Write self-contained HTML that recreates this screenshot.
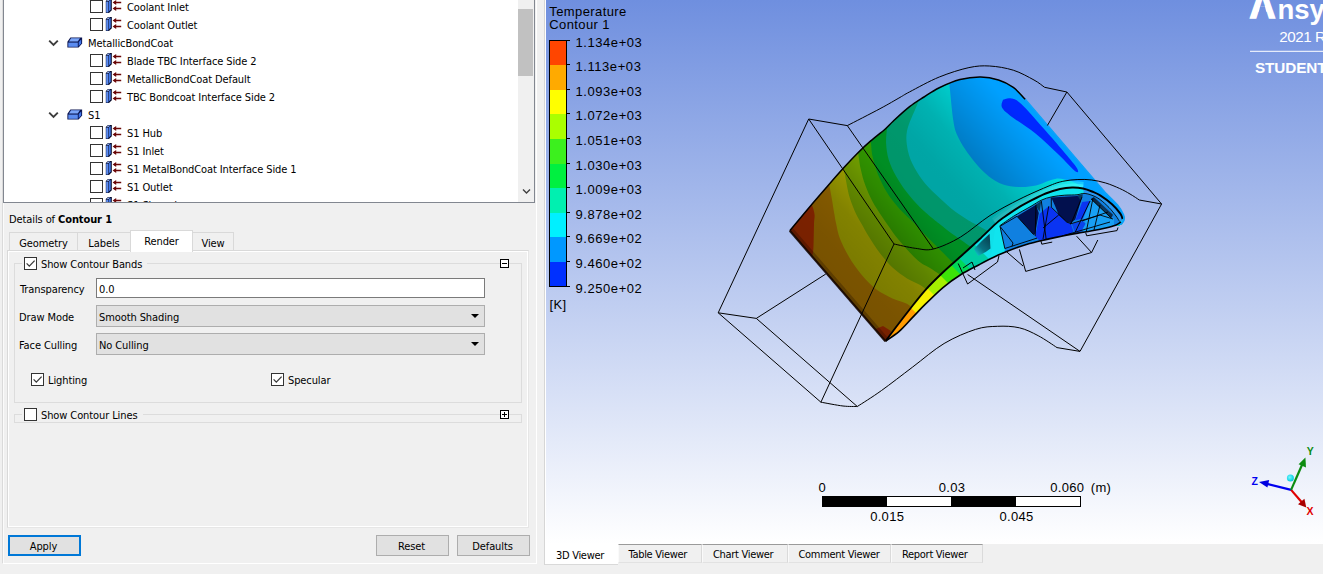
<!DOCTYPE html>
<html lang="en">
<head>
<meta charset="utf-8">
<title>CFD-Post</title>
<style>
html,body{margin:0;padding:0;}
body{width:1323px;height:574px;overflow:hidden;background:#f0f0f0;position:relative;
 font-family:"DejaVu Sans Condensed","Liberation Sans",sans-serif;font-size:11px;color:#000;letter-spacing:-0.1px;}
.abs{position:absolute;}
svg.ic{position:absolute;overflow:visible;}
#tree{position:absolute;left:3px;top:-1px;width:532px;height:204px;background:#fff;border:1px solid #828790;box-sizing:border-box;overflow:hidden;}
.row{position:absolute;left:-4px;width:520px;height:18px;line-height:18px;white-space:nowrap;margin-top:1px;}
.row .t{position:absolute;top:0;}
.cb{position:absolute;width:13px;height:13px;box-sizing:border-box;border:1px solid #333;background:#fff;}
#sb{position:absolute;left:514px;top:0;width:16px;height:202px;background:#f0f0f0;}
#sb .thumb{position:absolute;left:0;top:9px;width:15px;height:67px;background:#c1c1c1;}
.pane{position:absolute;box-sizing:border-box;border:1px solid #d9d9d9;border-right-color:#e6e6e6;border-bottom-color:#e6e6e6;box-shadow:inset 1px 1px 0 #fff, inset -1px -1px 0 #fff;}
.dock{position:absolute;left:2px;top:-1px;width:535px;height:565px;box-sizing:border-box;border-left:1px solid #dadada;border-right:1px solid #fff;border-bottom:1px solid #fff;}
.dockl{position:absolute;left:3px;top:203px;width:1px;height:360px;background:#fbfbfb;}
.tab{position:absolute;box-sizing:border-box;border:1px solid #d9d9d9;background:#f0f0f0;text-align:center;padding-top:1px;}
.tab.sel{background:#fff;border-bottom:none;}
.grp{position:absolute;box-sizing:border-box;border:1px solid #dcdcdc;}
.gl{position:absolute;background:#f0f0f0;}
.lbl{position:absolute;white-space:nowrap;line-height:13px;margin-top:1px;}
.edit{position:absolute;box-sizing:border-box;border:1px solid #7a7a7a;background:#fff;line-height:18px;}
.edit span{position:absolute;left:2px;top:2px;}
.combo{position:absolute;box-sizing:border-box;border:1px solid #adadad;background:#e1e1e1;line-height:20px;}
.combo span{position:absolute;left:2px;top:2px;}
.combo .arr{position:absolute;right:5px;top:8px;width:0;height:0;border-left:4px solid transparent;border-right:4px solid transparent;border-top:4px solid #000;}
.pm{position:absolute;width:9px;height:9px;box-sizing:border-box;border:1px solid #000;background:#fff;}
.pm .h{position:absolute;left:1px;top:3px;width:5px;height:1px;background:#000;}
.pm .v{position:absolute;left:3px;top:1px;width:1px;height:5px;background:#000;}
.btn{position:absolute;box-sizing:border-box;border:1px solid #adadad;background:#e1e1e1;text-align:center;line-height:22px;height:21px;padding-right:2px;}
.btn.def{border:2px solid #0078d7;line-height:20px;}
#viewer{position:absolute;left:546px;top:0;width:777px;height:544px;overflow:hidden;
 background:linear-gradient(to bottom,#6f8fdf 0%,#ffffff 100%);}
#viewer svg.model{position:absolute;left:0;top:0;}
.vline{position:absolute;left:544px;top:0;width:1px;height:565px;background:#d6d6d6;}
.vline2{position:absolute;left:545px;top:0;width:1px;height:565px;background:#fff;}
.leg{position:absolute;font-family:"Liberation Sans",sans-serif;font-size:13px;line-height:12.6px;letter-spacing:0.4px;white-space:nowrap;color:#000;}
.leg.num{font-size:13px;letter-spacing:0.58px;}
.vtab{position:absolute;box-sizing:border-box;border-left:1px solid #fafafa;border-right:1px solid #dadada;border-bottom:1px solid #e2e2e2;border-top:1px solid #9a9a9a;background:#f0f0f0;text-align:left;padding-left:10px;white-space:nowrap;letter-spacing:-0.3px;}
.vtab.sel{background:#fff;border:none;border-bottom:1px solid #d9d9d9;padding-left:11px;}

</style>
</head>
<body>
<svg width="0" height="0" style="position:absolute">
<defs>
<g id="bnd">
 <path d="M0.8 3 L3 1 L6.8 1 L6.8 12.3 L4 14.9 L0.8 14.9 Z" fill="#060a28"/>
 <path d="M1.2 3.6 L3.4 3.6 L3.4 14.5 L1.2 14.5 Z" fill="#5e8ef2"/>
 <path d="M3.9 3.3 L5.7 2 L5.7 11.6 L3.9 13.4 Z" fill="#4179ea"/>
 <path d="M1.6 3 L3.3 1.5 L5.2 1.5 L3.6 3 Z" fill="#9bbcff"/>
 <path d="M9 4.5 L16.2 4.5 M9 10.5 L16.2 10.5" stroke="#6b0808" stroke-width="1.4" fill="none"/>
 <path d="M7.6 4.5 L11.2 2 L11.2 7 Z M7.6 10.5 L11.2 8 L11.2 13 Z" fill="#6b0808"/>
</g>
<g id="box">
 <path d="M0.4 4.8 L3.4 0.4 L15.1 0.4 L15.1 6.6 L11.6 10.6 L0.4 10.6 Z" fill="#0a1450"/>
 <path d="M1.3 5.6 L10.8 5.6 L10.8 9.8 L1.3 9.8 Z" fill="#5b8cf0"/>
 <path d="M1.9 4.6 L4.1 1.3 L13 1.3 L10.7 4.6 Z" fill="#7aa5f8"/>
 <path d="M11.7 5 L14.2 2.4 L14.2 6.2 L11.7 9.2 Z" fill="#3f74e8"/>
</g>
</defs>
</svg>

<div id="tree">
<div class="row" style="top:-2px"><span class="cb" style="left:90px;top:1px"></span><svg class="ic" style="left:105px;top:-1px" width="17" height="16" viewBox="0 0 17 16"><use href="#bnd"/></svg><span class="t" style="left:127px">Coolant Inlet</span></div>
<div class="row" style="top:16px"><span class="cb" style="left:90px;top:1px"></span><svg class="ic" style="left:105px;top:-1px" width="17" height="16" viewBox="0 0 17 16"><use href="#bnd"/></svg><span class="t" style="left:127px">Coolant Outlet</span></div>
<div class="row" style="top:34px"><svg class="ic" style="left:48px;top:4px" width="11" height="8" viewBox="0 0 11 8"><path d="M1.2 1.6 L5.5 5.9 L9.8 1.6" fill="none" stroke="#3c3c3c" stroke-width="1.9"/></svg><svg class="ic" style="left:67px;top:2px" width="16" height="13" viewBox="0 0 16 13"><use href="#box"/></svg><span class="t" style="left:88px">MetallicBondCoat</span></div>
<div class="row" style="top:52px"><span class="cb" style="left:90px;top:1px"></span><svg class="ic" style="left:105px;top:-1px" width="17" height="16" viewBox="0 0 17 16"><use href="#bnd"/></svg><span class="t" style="left:127px">Blade TBC Interface Side 2</span></div>
<div class="row" style="top:70px"><span class="cb" style="left:90px;top:1px"></span><svg class="ic" style="left:105px;top:-1px" width="17" height="16" viewBox="0 0 17 16"><use href="#bnd"/></svg><span class="t" style="left:127px">MetallicBondCoat Default</span></div>
<div class="row" style="top:88px"><span class="cb" style="left:90px;top:1px"></span><svg class="ic" style="left:105px;top:-1px" width="17" height="16" viewBox="0 0 17 16"><use href="#bnd"/></svg><span class="t" style="left:127px">TBC Bondcoat Interface Side 2</span></div>
<div class="row" style="top:106px"><svg class="ic" style="left:48px;top:4px" width="11" height="8" viewBox="0 0 11 8"><path d="M1.2 1.6 L5.5 5.9 L9.8 1.6" fill="none" stroke="#3c3c3c" stroke-width="1.9"/></svg><svg class="ic" style="left:67px;top:2px" width="16" height="13" viewBox="0 0 16 13"><use href="#box"/></svg><span class="t" style="left:88px">S1</span></div>
<div class="row" style="top:124px"><span class="cb" style="left:90px;top:1px"></span><svg class="ic" style="left:105px;top:-1px" width="17" height="16" viewBox="0 0 17 16"><use href="#bnd"/></svg><span class="t" style="left:127px">S1 Hub</span></div>
<div class="row" style="top:142px"><span class="cb" style="left:90px;top:1px"></span><svg class="ic" style="left:105px;top:-1px" width="17" height="16" viewBox="0 0 17 16"><use href="#bnd"/></svg><span class="t" style="left:127px">S1 Inlet</span></div>
<div class="row" style="top:160px"><span class="cb" style="left:90px;top:1px"></span><svg class="ic" style="left:105px;top:-1px" width="17" height="16" viewBox="0 0 17 16"><use href="#bnd"/></svg><span class="t" style="left:127px">S1 MetalBondCoat Interface Side 1</span></div>
<div class="row" style="top:178px"><span class="cb" style="left:90px;top:1px"></span><svg class="ic" style="left:105px;top:-1px" width="17" height="16" viewBox="0 0 17 16"><use href="#bnd"/></svg><span class="t" style="left:127px">S1 Outlet</span></div>
<div class="row" style="top:196px"><span class="cb" style="left:90px;top:1px"></span><svg class="ic" style="left:105px;top:-1px" width="17" height="16" viewBox="0 0 17 16"><use href="#bnd"/></svg><span class="t" style="left:127px">S1 Shroud</span></div>
<div id="sb"><div class="thumb"></div><svg class="ic" style="left:4px;top:188px" width="9" height="7" viewBox="0 0 9 7"><path d="M1 1.5 L4.5 5 L8 1.5" fill="none" stroke="#404040" stroke-width="1.4"/></svg></div>
</div>
<div class="dock"></div><div class="dockl"></div>
<div class="lbl" style="left:9px;top:212px">Details of <b>Contour 1</b></div>
<div class="pane" style="left:7px;top:250px;width:522px;height:278px"></div>
<div class="tab" style="left:9px;top:232px;width:69px;height:19px;line-height:19px">Geometry</div>
<div class="tab" style="left:77px;top:232px;width:54px;height:19px;line-height:19px">Labels</div>
<div class="tab" style="left:192px;top:232px;width:42px;height:19px;line-height:19px">View</div>
<div class="tab sel" style="left:130px;top:230px;width:63px;height:22px;line-height:20px">Render</div>
<div class="grp" style="left:14px;top:263px;width:508px;height:140px"></div>
<div class="gl" style="left:22px;top:256px;width:125px;height:14px"></div>
<div class="cb" style="left:24px;top:257px"><svg width="11" height="11" viewBox="0 0 11 11" style="position:absolute;left:0;top:0"><path d="M1.6 5.4 L4.3 8.1 L9.6 2.6" fill="none" stroke="#3a3a3a" stroke-width="1.3"/></svg></div>
<div class="lbl" style="left:41px;top:257px">Show Contour Bands</div>
<div class="pm" style="left:500px;top:259px"><i class="h"></i></div>
<div class="lbl" style="left:20px;top:282px">Transparency</div>
<div class="edit" style="left:96px;top:278px;width:389px;height:20px"><span>0.0</span></div>
<div class="lbl" style="left:19px;top:310px">Draw Mode</div>
<div class="combo" style="left:96px;top:305px;width:389px;height:22px"><span>Smooth Shading</span><i class="arr"></i></div>
<div class="lbl" style="left:19px;top:338px">Face Culling</div>
<div class="combo" style="left:96px;top:333px;width:389px;height:22px"><span>No Culling</span><i class="arr"></i></div>
<div class="cb" style="left:31px;top:373px"><svg width="11" height="11" viewBox="0 0 11 11" style="position:absolute;left:0;top:0"><path d="M1.6 5.4 L4.3 8.1 L9.6 2.6" fill="none" stroke="#3a3a3a" stroke-width="1.3"/></svg></div>
<div class="lbl" style="left:48px;top:373px">Lighting</div>
<div class="cb" style="left:271px;top:373px"><svg width="11" height="11" viewBox="0 0 11 11" style="position:absolute;left:0;top:0"><path d="M1.6 5.4 L4.3 8.1 L9.6 2.6" fill="none" stroke="#3a3a3a" stroke-width="1.3"/></svg></div>
<div class="lbl" style="left:288px;top:373px">Specular</div>
<div class="grp" style="left:14px;top:414px;width:508px;height:9px"></div>
<div class="gl" style="left:22px;top:407px;width:121px;height:14px"></div>
<div class="cb" style="left:24px;top:408px"></div>
<div class="lbl" style="left:41px;top:408px">Show Contour Lines</div>
<div class="pm" style="left:500px;top:410px"><i class="h"></i><i class="v"></i></div>
<div class="btn def" style="left:8px;top:535px;width:73px;height:21px">Apply</div>
<div class="btn" style="left:376px;top:535px;width:73px;height:21px">Reset</div>
<div class="btn" style="left:457px;top:535px;width:73px;height:21px">Defaults</div>
<div id="viewer">
<svg class="model" width="777" height="544" viewBox="546 0 777 544">
<defs>
<clipPath id="cs"><path d="M789.8 230.8 C790.7 229.7 791.8 228.4 795.4 224.0 C799.0 219.6 806.1 211.0 811.7 204.4 C817.3 197.8 823.7 190.5 829.0 184.4 C834.3 178.3 838.7 173.3 843.5 168.0 C848.3 162.7 853.5 157.2 858.0 152.7 C862.5 148.2 866.2 144.8 870.7 140.9 C875.2 137.0 881.2 132.5 885.0 129.2 C888.8 125.9 889.3 124.8 893.4 121.0 C897.5 117.2 904.5 110.7 909.6 106.7 C914.7 102.7 919.0 100.2 924.0 97.0 C929.0 93.8 933.3 90.7 939.3 87.8 C945.3 84.9 953.1 81.4 960.0 79.6 C966.9 77.8 974.3 76.9 980.7 77.0 C987.1 77.1 993.1 78.3 998.5 80.0 C1003.9 81.7 1008.8 84.2 1013.3 87.4 C1017.8 90.6 1023.2 97.3 1025.2 99.3 L1106 193.4 C1107.9 195.3 1114.6 201.5 1117.5 205.0 C1120.4 208.5 1122.3 212.0 1123.4 214.5 C1124.5 217.0 1124.4 218.3 1124.0 220.0 C1123.6 221.7 1122.4 223.5 1121.0 224.5 C1119.6 225.5 1116.4 225.8 1115.5 226.0 L1122.6 219 C1122.2 218.1 1122.1 216.0 1120.3 213.6 C1118.5 211.2 1115.3 207.3 1112.0 204.3 C1108.7 201.3 1103.5 197.5 1100.2 195.4 C1096.9 193.3 1094.9 192.7 1092.0 191.5 C1089.1 190.3 1086.3 189.2 1083.0 188.5 C1079.7 187.8 1075.8 187.4 1072.0 187.5 C1068.2 187.6 1064.4 188.0 1060.0 189.0 C1055.6 190.0 1050.4 191.6 1045.7 193.5 C1041.0 195.4 1036.4 197.8 1031.8 200.2 C1027.2 202.6 1022.5 205.1 1017.9 207.9 C1013.3 210.8 1007.7 214.7 1004.0 217.3 C1000.3 219.9 1000.0 219.9 995.9 223.6 C991.8 227.3 985.2 233.9 979.5 239.3 C973.8 244.7 967.4 250.4 961.4 255.8 C955.4 261.2 949.3 266.2 943.3 272.0 C937.2 277.8 930.6 284.1 925.1 290.3 C919.6 296.5 914.8 302.9 910.0 309.0 C905.2 315.1 900.2 321.6 896.1 327.0 C892.0 332.4 887.2 338.8 885.4 341.2 Z"/></clipPath>
<clipPath id="ce"><path d="M885.4 341.2 C887.2 338.8 892.0 332.4 896.1 327.0 C900.2 321.6 905.2 315.1 910.0 309.0 C914.8 302.9 919.6 296.5 925.1 290.3 C930.6 284.1 937.2 277.8 943.3 272.0 C949.3 266.2 955.4 261.2 961.4 255.8 C967.4 250.4 973.8 244.7 979.5 239.3 C985.2 233.9 991.8 227.3 995.9 223.6 C1000.0 219.9 1000.3 219.9 1004.0 217.3 C1007.7 214.7 1013.3 210.8 1017.9 207.9 C1022.5 205.1 1027.2 202.6 1031.8 200.2 C1036.4 197.8 1041.0 195.4 1045.7 193.5 C1050.4 191.6 1055.6 190.0 1060.0 189.0 C1064.4 188.0 1068.2 187.6 1072.0 187.5 C1075.8 187.4 1079.7 187.8 1083.0 188.5 C1086.3 189.2 1089.1 190.3 1092.0 191.5 C1094.9 192.7 1096.9 193.3 1100.2 195.4 C1103.5 197.5 1108.7 201.3 1112.0 204.3 C1115.3 207.3 1118.5 211.2 1120.3 213.6 C1122.1 216.0 1122.2 218.1 1122.6 219.0 L1122.6 221 C1120.1 222.6 1118.0 224.3 1115.5 225.3 C1113.0 226.3 1109.7 227.1 1105.7 228.0 C1101.8 228.9 1096.4 230.0 1091.8 230.8 C1087.2 231.7 1082.6 232.3 1077.9 233.1 C1073.2 233.9 1069.3 234.6 1063.9 235.7 C1058.5 236.8 1051.1 238.4 1045.7 239.6 C1040.3 240.8 1036.4 241.6 1031.8 242.9 C1027.2 244.2 1023.6 245.1 1017.9 247.2 C1012.2 249.3 1004.1 252.4 997.7 255.3 C991.3 258.2 985.5 261.3 979.5 264.5 C973.5 267.7 967.4 270.5 961.4 274.3 C955.4 278.1 949.3 282.3 943.3 287.3 C937.3 292.3 930.5 299.1 925.4 304.2 C920.2 309.2 916.8 313.1 912.4 317.6 C908.0 322.1 903.7 327.4 899.2 331.3 C894.7 335.2 887.7 339.6 885.4 341.2 Z"/></clipPath>
<linearGradient id="lg" gradientUnits="userSpaceOnUse" x1="337.2" y1="-292.1" x2="538.3" y2="-466.4"><stop offset="0.000" stop-color="#000" stop-opacity="0.53"/><stop offset="0.090" stop-color="#000" stop-opacity="0.52"/><stop offset="0.203" stop-color="#000" stop-opacity="0.49"/><stop offset="0.278" stop-color="#000" stop-opacity="0.43"/><stop offset="0.353" stop-color="#000" stop-opacity="0.35"/><stop offset="0.429" stop-color="#000" stop-opacity="0.29"/><stop offset="0.579" stop-color="#000" stop-opacity="0.28"/><stop offset="0.692" stop-color="#000" stop-opacity="0.23"/><stop offset="0.805" stop-color="#000" stop-opacity="0.12"/><stop offset="0.936" stop-color="#000" stop-opacity="0.00"/><stop offset="1.000" stop-color="#000" stop-opacity="0.00"/></linearGradient>
<linearGradient id="tg" gradientUnits="userSpaceOnUse" x1="975" y1="255" x2="990" y2="240"><stop offset="0" stop-color="#10c8d0"/><stop offset="0.45" stop-color="#087080"/><stop offset="1" stop-color="#064858"/></linearGradient>
<linearGradient id="sg" gradientUnits="userSpaceOnUse" x1="1092" y1="198" x2="1112" y2="216"><stop offset="0" stop-color="#0a2038"/><stop offset="0.6" stop-color="#0c3860"/><stop offset="1" stop-color="#0a2a48"/></linearGradient>
</defs>
<g clip-path="url(#cs)">
<path d="M780.0 100.0 L1200.0 0.0 L1200.0 400.0 L780.0 400.0 Z" fill="#ff4500"/>
<path d="M808.0 200.0 C808.6 200.7 810.6 202.0 811.7 204.4 C812.8 206.8 814.1 211.0 814.5 214.3 C814.9 217.6 814.1 219.4 814.0 224.0 C813.9 228.6 813.8 237.0 813.6 242.0 C813.4 247.0 813.5 250.7 812.7 254.0 C811.9 257.3 809.6 260.7 809.0 262.0 L879 350 L1300 700 L1300 -100 L700 -100 Z" fill="#ffae00"/>
<path d="M826.5 180.0 C826.9 180.7 828.1 181.4 829.0 184.4 C829.9 187.4 830.8 193.0 831.7 198.0 C832.6 203.0 833.6 210.0 834.4 214.3 C835.1 218.6 835.3 220.0 836.2 224.0 C837.1 228.0 837.8 233.1 839.9 238.5 C842.0 243.9 845.3 250.6 848.9 256.7 C852.5 262.8 857.1 269.4 861.6 274.8 C866.1 280.2 871.0 285.4 876.1 289.3 C881.2 293.2 887.4 296.0 892.5 298.4 C897.6 300.8 903.1 301.5 907.0 303.8 C910.9 306.1 914.5 310.6 916.0 312.0 L1300 700 L1300 -100 L700 -100 Z" fill="#ffff00"/>
<path d="M841.0 164.0 C841.4 164.7 842.6 165.1 843.5 168.0 C844.4 170.9 845.2 176.7 846.2 181.7 C847.2 186.7 848.1 192.6 849.8 198.0 C851.5 203.4 854.2 210.0 856.2 214.3 C858.2 218.6 859.5 220.3 861.6 224.0 C863.7 227.7 865.9 231.9 868.9 236.7 C871.9 241.5 875.9 247.9 879.8 253.0 C883.7 258.1 888.0 263.3 892.5 267.5 C897.0 271.7 902.5 275.5 907.0 278.4 C911.5 281.3 915.5 282.2 919.7 284.8 C923.9 287.4 930.0 292.5 932.0 294.0 L1300 700 L1300 -100 L700 -100 Z" fill="#a6e800"/>
<path d="M856.0 149.0 C856.3 149.6 857.2 149.4 858.0 152.7 C858.8 156.0 859.5 163.6 860.7 169.0 C861.9 174.4 863.3 179.9 865.3 185.3 C867.3 190.7 869.8 196.5 872.5 201.6 C875.2 206.7 879.2 212.4 881.6 216.1 C884.0 219.8 884.6 220.6 887.0 224.0 C889.4 227.4 892.8 232.5 896.1 236.7 C899.4 240.9 903.1 245.2 907.0 249.4 C910.9 253.6 915.5 258.8 919.7 262.1 C923.9 265.4 928.0 266.6 932.4 269.4 C936.8 272.2 943.7 277.4 946.0 279.0 L1300 700 L1300 -100 L700 -100 Z" fill="#46d400"/>
<path d="M869.0 137.0 C869.3 137.7 870.1 137.7 870.7 140.9 C871.3 144.1 871.3 150.7 872.5 156.3 C873.7 161.9 875.6 168.4 878.0 174.4 C880.4 180.4 883.7 187.2 887.0 192.6 C890.3 198.0 894.0 202.6 897.9 207.1 C901.8 211.6 907.7 217.0 910.6 219.8 C913.5 222.6 913.0 221.8 915.1 224.0 C917.2 226.2 920.1 229.7 923.3 233.0 C926.5 236.3 930.9 240.7 934.2 244.0 C937.5 247.3 940.6 250.3 943.3 253.0 C946.0 255.7 948.0 257.8 950.5 260.3 C953.0 262.8 956.8 266.7 958.0 268.0 L1300 700 L1300 -100 L700 -100 Z" fill="#00c832"/>
<path d="M888.0 124.0 C887.8 124.7 887.3 124.9 887.0 128.2 C886.7 131.5 885.8 138.3 886.1 143.6 C886.4 148.9 887.1 154.5 888.8 159.9 C890.5 165.3 893.1 170.8 896.1 176.2 C899.1 181.6 903.1 187.4 907.0 192.6 C910.9 197.8 915.2 202.6 919.7 207.1 C924.2 211.6 930.9 217.0 934.2 219.8 C937.5 222.6 937.2 222.1 939.6 224.0 C942.0 225.9 945.1 228.6 948.7 231.3 C952.3 234.0 957.8 237.7 961.4 240.3 C965.0 242.9 967.7 244.6 970.5 246.7 C973.3 248.8 976.8 251.9 978.0 253.0 L1300 700 L1300 -100 L700 -100 Z" fill="#00d296"/>
<path d="M920.0 98.0 C919.4 99.4 918.7 100.8 916.5 106.3 C914.3 111.8 908.4 123.6 907.0 131.0 C905.6 138.4 906.7 144.8 907.9 150.8 C909.1 156.8 911.3 161.8 914.2 167.2 C917.1 172.6 920.9 178.4 925.1 183.5 C929.3 188.6 934.8 193.5 939.6 198.0 C944.4 202.5 949.0 206.8 954.1 210.7 C959.2 214.6 967.0 219.4 970.5 221.6 C974.0 223.8 972.6 222.7 975.0 224.0 C977.4 225.3 981.5 227.4 985.0 229.4 C988.5 231.4 994.2 234.9 996.0 236.0 L1300 700 L1300 -100 L700 -100 Z" fill="#00e6e6"/>
<path d="M949.0 80.0 C949.2 81.7 949.3 83.3 950.0 90.0 C950.7 96.7 952.1 112.6 953.2 120.0 C954.4 127.4 954.9 129.7 956.9 134.5 C958.9 139.3 961.8 144.2 965.0 149.0 C968.2 153.8 972.0 159.0 975.9 163.5 C979.8 168.0 984.1 172.7 988.6 176.2 C993.1 179.7 997.9 182.6 1003.1 184.4 C1008.3 186.2 1014.5 186.8 1020.0 187.0 C1025.5 187.2 1031.4 186.4 1036.0 185.5 C1040.6 184.6 1044.1 182.4 1047.4 181.3 C1050.8 180.2 1053.2 179.0 1056.1 178.7 C1059.0 178.4 1061.9 179.0 1064.8 179.6 C1067.7 180.2 1070.6 180.9 1073.5 182.2 C1076.4 183.5 1080.1 185.6 1082.2 187.4 C1084.3 189.2 1085.4 192.1 1086.0 193.0 L1300 700 L1300 -100 L700 -100 Z" fill="#00a0ff"/>
<path d="M875.7 329.0 L883.0 326.0 L891.0 331.0 L888.0 345.0 L880.0 345.0 Z" fill="#ff4500"/>
<path d="M1003.0 99.8 C1004.2 99.5 1007.4 97.6 1010.4 98.3 C1013.4 99.0 1015.3 98.5 1021.0 103.7 C1026.7 108.9 1035.5 119.3 1044.5 129.5 C1053.5 139.7 1069.6 158.0 1074.8 165.0 C1080.0 172.0 1078.3 173.2 1075.6 171.5 C1072.9 169.8 1065.2 160.8 1058.5 154.5 C1051.8 148.2 1043.2 139.8 1035.5 133.5 C1027.8 127.2 1017.6 121.3 1012.0 117.0 C1006.4 112.7 1003.5 110.4 1002.0 107.5 C1000.5 104.6 1002.8 101.1 1003.0 99.8 Z" fill="#0028ff"/>
<path d="M995.9 223.6 C997.2 222.6 1000.3 219.9 1004.0 217.3 C1007.7 214.7 1013.3 210.8 1017.9 207.9 C1022.5 205.1 1027.2 202.6 1031.8 200.2 C1036.4 197.8 1041.0 195.4 1045.7 193.5 C1050.4 191.6 1055.6 190.0 1060.0 189.0 C1064.4 188.0 1068.2 187.6 1072.0 187.5 C1075.8 187.4 1081.2 188.3 1083.0 188.5" fill="none" stroke="#38f8fc" stroke-width="13" stroke-opacity="0.45" stroke-linecap="butt"/>
<path d="M995.9 223.6 C997.2 222.6 1000.3 219.9 1004.0 217.3 C1007.7 214.7 1013.3 210.8 1017.9 207.9 C1022.5 205.1 1027.2 202.6 1031.8 200.2 C1036.4 197.8 1041.0 195.4 1045.7 193.5 C1050.4 191.6 1055.6 190.0 1060.0 189.0 C1064.4 188.0 1068.2 187.6 1072.0 187.5 C1075.8 187.4 1081.2 188.3 1083.0 188.5" fill="none" stroke="#48fcff" stroke-width="8" stroke-opacity="0.55" stroke-linecap="butt"/>
<path d="M780.0 0.0 L1200.0 0.0 L1200.0 400.0 L780.0 400.0 Z" fill="url(#lg)"/>
</g>
<g clip-path="url(#ce)">
<path d="M880.0 180.0 L1130.0 180.0 L1130.0 350.0 L880.0 350.0 Z" fill="#10e0ea"/>
<path d="M-799.0 200.0 L754.0 200.0 L954.0 400.0 L-599.0 400.0 Z" fill="#ee3c00"/>
<path d="M753.0 200.0 L804.0 200.0 L1004.0 400.0 L953.0 400.0 Z" fill="#ff9c00"/>
<path d="M803.0 200.0 L840.0 200.0 L1040.0 400.0 L1003.0 400.0 Z" fill="#f6f000"/>
<path d="M839.0 200.0 L866.0 200.0 L1066.0 400.0 L1039.0 400.0 Z" fill="#a4f000"/>
<path d="M865.0 200.0 L887.0 200.0 L1087.0 400.0 L1065.0 400.0 Z" fill="#3ce408"/>
<path d="M886.0 200.0 L902.0 200.0 L1102.0 400.0 L1086.0 400.0 Z" fill="#00d858"/>
<path d="M901.0 200.0 L930.0 200.0 L1130.0 400.0 L1101.0 400.0 Z" fill="#00cca4"/>
<path d="M974.0 249.0 L981.3 241.6 L989.6 233.7 L990.5 248.5 L985.7 252.0 L978.0 256.0 Z" fill="url(#tg)"/>
<path d="M999.6 225.9 C1001.9 224.3 1008.3 219.6 1013.5 216.3 C1018.7 213.0 1026.4 209.0 1031.0 206.3 C1035.6 203.6 1037.8 201.8 1041.3 200.2 C1044.8 198.6 1047.9 197.6 1051.8 196.8 C1055.7 196.0 1060.6 195.5 1064.8 195.2 C1069.0 194.9 1073.8 195.1 1077.0 194.8 C1080.2 194.5 1081.5 193.3 1084.0 193.4 C1086.5 193.5 1089.3 194.3 1092.0 195.3 C1094.7 196.3 1097.2 197.5 1100.0 199.5 C1102.8 201.5 1106.3 204.8 1109.0 207.5 C1111.7 210.2 1114.2 213.7 1116.0 216.0 C1117.8 218.3 1118.9 220.6 1119.5 221.5 L1121 240 L1004.8 262 L1004.8 249 Z" fill="#1080e0"/>
<path d="M1017.0 216.3 L1036.0 204.8 L1038.8 213.0 L1035.2 233.8 L1034.0 235.0 Z" fill="#02104e"/>
<path d="M1035.2 204.9 L1041.3 200.9 L1039.6 211.5 Z" fill="#0a3a5c"/>
<path d="M1039.6 213.7 L1048.7 206.3 L1051.3 207.2 L1058.7 215.0 L1066.6 222.0 L1070.9 223.7 L1073.5 231.6 L1063.1 240.0 L1043.1 244.0 L1035.2 236.5 Z" fill="#0a34f2"/>
<path d="M1051.3 197.6 L1077.0 195.9 L1082.2 196.7 L1075.3 219.4 L1070.9 222.9 L1066.6 222.0 L1058.7 215.0 L1055.2 206.3 Z" fill="#02104e"/>
<path d="M1077.5 195.6 L1083.2 194.2 L1080.3 200.2 Z" fill="#0a3a5c"/>
<path d="M1082.2 202.0 L1090.0 201.1 L1083.1 218.5 L1075.3 220.2 Z" fill="#0a34f2"/>
<path d="M1071.8 223.7 L1082.2 221.1 L1085.7 223.7 L1082.2 231.0 L1075.3 234.0 Z" fill="#0a44ea"/>
<path d="M1090.0 202.8 L1093.0 198.0 L1113.9 219.1 L1114.0 228.0 L1085.7 236.0 L1082.2 229.8 L1085.7 223.7 L1083.1 218.5 Z" fill="#18a0f4"/>
<path d="M1091.0 198.9 L1093.8 196.9 L1113.0 214.8 L1111.3 218.2 Z" fill="url(#sg)"/>
<path d="M995.9 223.6 C997.2 222.6 1000.3 219.9 1004.0 217.3 C1007.7 214.7 1013.3 210.8 1017.9 207.9 C1022.5 205.1 1027.2 202.6 1031.8 200.2 C1036.4 197.8 1041.0 195.4 1045.7 193.5 C1050.4 191.6 1055.6 190.0 1060.0 189.0 C1064.4 188.0 1068.2 187.6 1072.0 187.5 C1075.8 187.4 1081.2 188.3 1083.0 188.5 L1084 193.4 L1077 194.8 L1064.8 195.2 L1051.8 196.8 L1041.3 200.2 L1031 206.3 L1013.5 216.3 L999.6 225.9 L1004.8 250 L990 262 Z" fill="#10e4ee"/>
<path d="M1083.0 188.5 C1084.5 189.0 1089.1 190.3 1092.0 191.5 C1094.9 192.7 1096.9 193.3 1100.2 195.4 C1103.5 197.5 1108.7 201.3 1112.0 204.3 C1115.3 207.3 1118.5 211.2 1120.3 213.6 C1122.1 216.0 1122.2 218.1 1122.6 219.0 L1122.6 221 L1119.5 221.5 L1116 216 L1109 207.5 L1100 199.5 L1092 195.3 L1084 193.4 Z" fill="#2a98f2"/>
<path d="M1000 226.3 L1017 216.3 L1033.6 234.6 M1000 226.3 L1004.8 248.5 M1004.8 248.5 L1037 238.1 M1000.5 227 L1013 243 L1012 246.3 M1036 204.8 L1035.2 236 M1041.3 200.9 L1047 246 M1048.7 206.3 L1043 239 M1051.3 197.6 L1051.3 207.2 L1066.6 222 L1071 223.7 L1082.2 196.7 M1058.7 215 L1043 228 M1090 201.1 L1075.3 232 M1093 198 L1086 233 M1100 205 L1094 230 M1070 224 L1100 215 L1113 219 M1062 236 L1110 222 M1082 221 L1108 212 M1091 198.9 L1111.3 218.2" fill="none" stroke="#000" stroke-width="0.9"/>
<path d="M999.6 225.9 C1001.9 224.3 1008.3 219.6 1013.5 216.3 C1018.7 213.0 1026.4 209.0 1031.0 206.3 C1035.6 203.6 1037.8 201.8 1041.3 200.2 C1044.8 198.6 1047.9 197.6 1051.8 196.8 C1055.7 196.0 1060.6 195.5 1064.8 195.2 C1069.0 194.9 1073.8 195.1 1077.0 194.8 C1080.2 194.5 1081.5 193.3 1084.0 193.4 C1086.5 193.5 1089.3 194.3 1092.0 195.3 C1094.7 196.3 1097.2 197.5 1100.0 199.5 C1102.8 201.5 1106.3 204.8 1109.0 207.5 C1111.7 210.2 1114.2 213.7 1116.0 216.0 C1117.8 218.3 1118.9 220.6 1119.5 221.5" fill="none" stroke="#000" stroke-width="0.9"/>
</g>
<path d="M885.4 341.2 C887.2 338.8 892.0 332.4 896.1 327.0 C900.2 321.6 905.2 315.1 910.0 309.0 C914.8 302.9 919.6 296.5 925.1 290.3 C930.6 284.1 937.2 277.8 943.3 272.0 C949.3 266.2 955.4 261.2 961.4 255.8 C967.4 250.4 973.8 244.7 979.5 239.3 C985.2 233.9 991.8 227.3 995.9 223.6 C1000.0 219.9 1000.3 219.9 1004.0 217.3 C1007.7 214.7 1013.3 210.8 1017.9 207.9 C1022.5 205.1 1027.2 202.6 1031.8 200.2 C1036.4 197.8 1041.0 195.4 1045.7 193.5 C1050.4 191.6 1055.6 190.0 1060.0 189.0 C1064.4 188.0 1068.2 187.6 1072.0 187.5 C1075.8 187.4 1079.7 187.8 1083.0 188.5 C1086.3 189.2 1089.1 190.3 1092.0 191.5 C1094.9 192.7 1096.9 193.3 1100.2 195.4 C1103.5 197.5 1108.7 201.3 1112.0 204.3 C1115.3 207.3 1118.5 211.2 1120.3 213.6 C1122.1 216.0 1122.2 218.1 1122.6 219.0" fill="none" stroke="#000" stroke-width="1.9"/>
<path d="M885.4 341.2 C887.7 339.6 894.7 335.2 899.2 331.3 C903.7 327.4 908.0 322.1 912.4 317.6 C916.8 313.1 920.2 309.2 925.4 304.2 C930.5 299.1 937.3 292.3 943.3 287.3 C949.3 282.3 955.4 278.1 961.4 274.3 C967.4 270.5 973.5 267.7 979.5 264.5 C985.5 261.3 991.3 258.2 997.7 255.3 C1004.1 252.4 1012.2 249.3 1017.9 247.2 C1023.6 245.1 1027.2 244.2 1031.8 242.9 C1036.4 241.6 1040.3 240.8 1045.7 239.6 C1051.1 238.4 1058.5 236.8 1063.9 235.7 C1069.3 234.6 1073.2 233.9 1077.9 233.1 C1082.6 232.3 1087.2 231.7 1091.8 230.8 C1096.4 230.0 1101.8 228.9 1105.7 228.0 C1109.7 227.1 1113.0 226.3 1115.5 225.3 C1118.0 224.3 1120.1 222.6 1121.0 222.0" fill="none" stroke="#000" stroke-width="1.6"/>
<path d="M1025.2 99.3 L1106 193.4 C1107.9 195.3 1114.6 201.5 1117.5 205.0 C1120.4 208.5 1122.3 212.0 1123.4 214.5 C1124.5 217.0 1124.4 218.3 1124.0 220.0 C1123.6 221.7 1121.5 223.8 1121.0 224.5" fill="none" stroke="#0aa2fc" stroke-width="1.6"/>
<path d="M789.8 230.8 C790.7 229.7 791.8 228.4 795.4 224.0 C799.0 219.6 806.1 211.0 811.7 204.4 C817.3 197.8 823.7 190.5 829.0 184.4 C834.3 178.3 838.7 173.3 843.5 168.0 C848.3 162.7 853.5 157.2 858.0 152.7 C862.5 148.2 866.2 144.8 870.7 140.9 C875.2 137.0 881.2 132.5 885.0 129.2 C888.8 125.9 889.3 124.8 893.4 121.0 C897.5 117.2 904.5 110.7 909.6 106.7 C914.7 102.7 919.0 100.2 924.0 97.0 C929.0 93.8 933.3 90.7 939.3 87.8 C945.3 84.9 953.1 81.4 960.0 79.6 C966.9 77.8 974.3 76.9 980.7 77.0 C987.1 77.1 993.1 78.3 998.5 80.0 C1003.9 81.7 1008.8 84.2 1013.3 87.4 C1017.8 90.6 1023.2 97.3 1025.2 99.3" fill="none" stroke="#000" stroke-width="1.5"/>
<path d="M791.4 230.2 L886.0 339.4" fill="none" stroke="#180800" stroke-width="5" stroke-opacity="0.28" clip-path="url(#cs)"/>
<path d="M789.8 230.8 L885.4 341.2" fill="none" stroke="#140600" stroke-width="2.2" stroke-opacity="0.9"/>
<path d="M718.2 312.8 L808.7 119.0 L847.3 125.6 M808.7 119.0 L894.0 244.0 L820.9 402.2 M847.3 125.6 L933.4 249.0 M847.3 125.6 C852.8 122.8 871.2 113.4 880.0 108.7 C888.8 104.0 895.1 100.2 900.0 97.4 C904.9 94.6 903.1 95.3 909.6 91.9 C916.1 88.5 929.4 81.0 939.3 77.0 C949.2 73.0 960.5 69.4 968.9 67.6 C977.3 65.8 982.2 65.6 989.6 66.0 C997.0 66.4 1005.9 67.9 1013.3 70.2 C1020.7 72.5 1028.8 77.2 1034.0 80.0 C1039.2 82.8 1042.8 86.1 1044.6 87.3 L1066.9 92 M1047.4 125.5 L1066.9 92.0 L1161.6 204.0 L1080.0 351.4 M894.0 244.0 C897.5 244.7 908.7 247.5 915.3 248.3 C921.9 249.1 925.8 250.9 933.4 249.0 C941.0 247.1 951.2 242.6 960.6 237.0 C970.0 231.4 980.1 221.8 990.0 215.5 C999.9 209.2 1010.0 204.0 1020.0 199.0 C1030.0 194.0 1042.7 188.5 1050.0 185.5 C1057.3 182.5 1059.2 182.1 1063.9 181.1 C1068.6 180.1 1073.2 179.7 1077.9 179.5 C1082.6 179.3 1087.2 179.4 1091.8 180.0 C1096.4 180.6 1101.0 181.6 1105.7 183.0 C1110.4 184.4 1115.7 186.7 1119.7 188.5 C1123.8 190.3 1126.7 192.1 1130.0 194.0 C1133.3 195.9 1137.8 199.0 1139.3 200.0 L1161.6 204 M756.3 318.4 L718.2 312.8 L820.9 402.2 M756.3 318.4 L857.3 406.5 M820.9 402.2 C824.6 402.8 836.9 405.3 843.0 406.0 C849.1 406.7 854.9 406.4 857.3 406.5 M756.3 318.4 L825.8 274.0 M857.3 406.5 C861.3 403.9 872.2 397.2 881.4 390.6 C890.6 384.0 902.2 374.9 912.7 367.0 C923.2 359.1 933.6 349.8 944.1 343.5 C954.6 337.2 966.6 332.3 975.5 329.4 C984.4 326.5 990.2 326.6 997.5 326.3 C1004.8 326.0 1012.6 326.2 1019.4 327.8 C1026.2 329.4 1031.9 332.4 1038.2 335.7 C1044.5 339.0 1053.9 345.6 1057.0 347.6 L1080 351.4 M1080.0 351.4 L967.6 274.5 M1019.4 249.4 L1025.7 271.4 L1091.6 252.5 L1097.8 240.0 M1091.6 252.5 L1076.6 236.2 M958.2 263.5 L967.6 284.0 L997.5 262.0 L999.0 255.7 M1006.3 251.5 L1023.0 266.0 M1040.7 240.0 L1041.8 244.2 L1052.2 242.1 M1085.7 232.7 L1086.7 235.8 L1117.0 230.6 L1118.0 227.5 M963.0 268.0 L972.0 262.0 L975.0 270.0" fill="none" stroke="#000" stroke-width="1" stroke-linejoin="round"/>
</svg>
<div class="leg" style="left:3.2999999999999545px;top:6px;">Temperature<br>Contour 1</div>
<div class="abs" style="left:3px;top:40px;width:18px;height:247px;background:#000"></div>
<div class="abs" style="left:4px;top:41px;width:16px;height:23.6px;background:#ff4500"></div>
<div class="abs" style="left:4px;top:64.6px;width:16px;height:25.0px;background:#ffaa00"></div>
<div class="abs" style="left:4px;top:89.6px;width:16px;height:24.0px;background:#ffff00"></div>
<div class="abs" style="left:4px;top:113.6px;width:16px;height:25.0px;background:#aaff00"></div>
<div class="abs" style="left:4px;top:138.6px;width:16px;height:25.0px;background:#3cf01e"></div>
<div class="abs" style="left:4px;top:163.6px;width:16px;height:24.0px;background:#00f040"></div>
<div class="abs" style="left:4px;top:187.6px;width:16px;height:25.0px;background:#00f0b0"></div>
<div class="abs" style="left:4px;top:212.6px;width:16px;height:24.0px;background:#00f0ff"></div>
<div class="abs" style="left:4px;top:236.6px;width:16px;height:25.0px;background:#0098ff"></div>
<div class="abs" style="left:4px;top:261.6px;width:16px;height:24.4px;background:#0030ff"></div>
<div class="abs" style="left:21px;top:40px;width:3px;height:1px;background:#000"></div>
<div class="leg num" style="left:29.4px;top:36.50px">1.134e+03</div>
<div class="abs" style="left:21px;top:64px;width:3px;height:1px;background:#000"></div>
<div class="leg num" style="left:29.4px;top:60.50px">1.113e+03</div>
<div class="abs" style="left:21px;top:89px;width:3px;height:1px;background:#000"></div>
<div class="leg num" style="left:29.4px;top:85.50px">1.093e+03</div>
<div class="abs" style="left:21px;top:113px;width:3px;height:1px;background:#000"></div>
<div class="leg num" style="left:29.4px;top:109.50px">1.072e+03</div>
<div class="abs" style="left:21px;top:138px;width:3px;height:1px;background:#000"></div>
<div class="leg num" style="left:29.4px;top:134.50px">1.051e+03</div>
<div class="abs" style="left:21px;top:163px;width:3px;height:1px;background:#000"></div>
<div class="leg num" style="left:29.4px;top:159.50px">1.030e+03</div>
<div class="abs" style="left:21px;top:187px;width:3px;height:1px;background:#000"></div>
<div class="leg num" style="left:29.4px;top:183.50px">1.009e+03</div>
<div class="abs" style="left:21px;top:212px;width:3px;height:1px;background:#000"></div>
<div class="leg num" style="left:29.4px;top:208.50px">9.878e+02</div>
<div class="abs" style="left:21px;top:236px;width:3px;height:1px;background:#000"></div>
<div class="leg num" style="left:29.4px;top:232.50px">9.669e+02</div>
<div class="abs" style="left:21px;top:261px;width:3px;height:1px;background:#000"></div>
<div class="leg num" style="left:29.4px;top:257.50px">9.460e+02</div>
<div class="abs" style="left:21px;top:286px;width:3px;height:1px;background:#000"></div>
<div class="leg num" style="left:29.4px;top:282.50px">9.250e+02</div>
<div class="leg" style="left:3.5px;top:298.7px">[K]</div>
<svg class="model" width="777" height="544" viewBox="546 0 777 544" style="font-family:'Liberation Sans',sans-serif">
<g fill="#fff">
<text x="1249.6" y="18.8" font-size="27.5" font-weight="bold"><tspan font-size="36" dy="-0.6" stroke="#fff" stroke-width="1.5" stroke-linejoin="miter">A</tspan><tspan x="1277.6" dy="0.6">nsys</tspan></text>
<defs><linearGradient id="bgg" gradientUnits="userSpaceOnUse" x1="0" y1="0" x2="0" y2="544"><stop offset="0" stop-color="#6f8fdf"/><stop offset="1" stop-color="#fff"/></linearGradient></defs>
<path d="M1260.2 6.2 L1264.9 6.2 L1266.4 12.2 L1258.7 12.2 Z" fill="url(#bgg)"/>
<text x="1279.3" y="42" font-size="15.2" letter-spacing="-0.45">2021 R2</text>
<rect x="1250" y="50.8" width="80" height="1"/>
<text x="1255" y="72.9" font-size="15.3" font-weight="bold" letter-spacing="-0.1">STUDENT</text>
</g>
<g fill="#000" font-size="13" letter-spacing="0.3">
<rect x="822" y="496" width="259" height="11" fill="#000"/>
<rect x="887" y="497" width="64" height="9" fill="#fff"/>
<rect x="1016" y="497" width="64" height="9" fill="#fff"/>
<text x="822.3" y="491.5" text-anchor="middle">0</text>
<text x="952" y="491.5" text-anchor="middle">0.03</text>
<text x="1050.2" y="491.5">0.060</text>
<text x="1090.8" y="491.5">(m)</text>
<text x="887.2" y="521.4" text-anchor="middle">0.015</text>
<text x="1016.5" y="521.4" text-anchor="middle">0.045</text>
</g>
<g font-size="10.5" font-weight="bold">
<defs><radialGradient id="sph" cx="0.4" cy="0.4" r="0.7"><stop offset="0" stop-color="#7ff4fa"/><stop offset="0.6" stop-color="#1fdcec"/><stop offset="1" stop-color="#10b8cc"/></radialGradient></defs>
<path d="M1291.1 489.9 L1266 483.6" stroke="#0000f0" stroke-width="2.2" fill="none"/>
<path d="M1259 481.9 L1269.2 480 L1267.4 487.6 Z" fill="#0000e0"/>
<path d="M1291.1 489.9 L1302 502.5" stroke="#e00000" stroke-width="2.2" fill="none"/>
<path d="M1306.3 507.6 L1298 504.2 L1304.4 498.8 Z" fill="#a80000"/>
<path d="M1291.1 489.9 L1302.6 463.5" stroke="#0c8c10" stroke-width="2.2" fill="none"/>
<path d="M1305.4 457.4 L1306 467.4 L1298.6 464.2 Z" fill="#0c8c10"/>
<circle cx="1290.4" cy="478" r="3.5" fill="url(#sph)"/>
<text x="1306.8" y="454.6" fill="#0c8c10">Y</text>
<text x="1251.6" y="484.7" fill="#0000f0">Z</text>
<text x="1306.6" y="514.7" fill="#e00000">X</text>
</g>
</svg>
</div>
<div class="vline"></div><div class="vline2"></div>
<div class="vtab sel" style="left:545px;top:544px;width:72.5px;height:21px;line-height:24px">3D Viewer</div>
<div class="vtab" style="left:617.5px;top:544px;width:84.5px;height:19px;line-height:20px">Table Viewer</div>
<div class="vtab" style="left:702px;top:544px;width:85.5px;height:19px;line-height:20px">Chart Viewer</div>
<div class="vtab" style="left:787.5px;top:544px;width:103.5px;height:19px;line-height:20px">Comment Viewer</div>
<div class="vtab" style="left:891px;top:544px;width:91.5px;height:19px;line-height:20px">Report Viewer</div>
</body>
</html>
